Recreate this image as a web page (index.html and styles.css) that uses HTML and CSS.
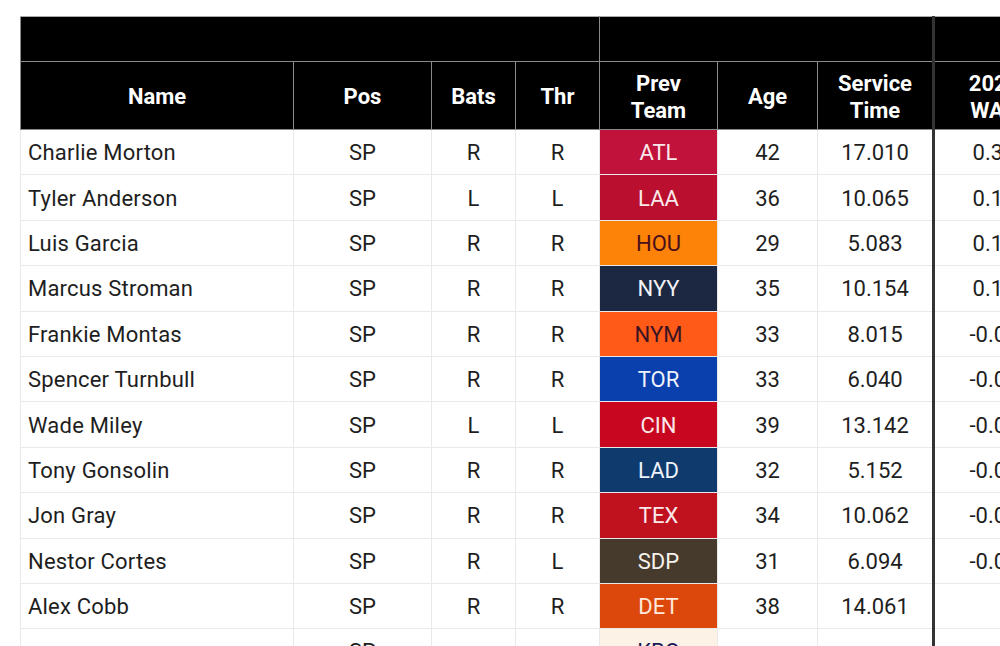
FILE: index.html
```html
<!DOCTYPE html>
<html>
<head>
<meta charset="utf-8">
<link rel="stylesheet" href="styles.css">
</head>
<body>
<div class="wrap">
<table class="roster">
  <colgroup>
    <col class="c-name"><col class="c-pos"><col class="c-bats"><col class="c-thr"><col class="c-team"><col class="c-age"><col class="c-svc"><col class="c-war">
  </colgroup>
  <thead>
    <tr class="super">
      <th colspan="4"></th>
      <th colspan="3"></th>
      <th class="war"></th>
    </tr>
    <tr class="head">
      <th>Name</th><th>Pos</th><th>Bats</th><th>Thr</th><th>Prev<br>Team</th><th>Age</th><th>Service<br>Time</th><th class="war">2024<br>WAR</th>
    </tr>
  </thead>
  <tbody>
    <tr><td class="name">Charlie Morton</td><td>SP</td><td>R</td><td>R</td><td class="team atl">ATL</td><td>42</td><td>17.010</td><td class="war">0.35</td></tr>
    <tr><td class="name">Tyler Anderson</td><td>SP</td><td>L</td><td>L</td><td class="team laa">LAA</td><td>36</td><td>10.065</td><td class="war">0.17</td></tr>
    <tr><td class="name">Luis Garcia</td><td>SP</td><td>R</td><td>R</td><td class="team hou">HOU</td><td>29</td><td>5.083</td><td class="war">0.12</td></tr>
    <tr><td class="name">Marcus Stroman</td><td>SP</td><td>R</td><td>R</td><td class="team nyy">NYY</td><td>35</td><td>10.154</td><td class="war">0.10</td></tr>
    <tr><td class="name">Frankie Montas</td><td>SP</td><td>R</td><td>R</td><td class="team nym">NYM</td><td>33</td><td>8.015</td><td class="war">-0.02</td></tr>
    <tr><td class="name">Spencer Turnbull</td><td>SP</td><td>R</td><td>R</td><td class="team tor">TOR</td><td>33</td><td>6.040</td><td class="war">-0.05</td></tr>
    <tr><td class="name">Wade Miley</td><td>SP</td><td>L</td><td>L</td><td class="team cin">CIN</td><td>39</td><td>13.142</td><td class="war">-0.06</td></tr>
    <tr><td class="name">Tony Gonsolin</td><td>SP</td><td>R</td><td>R</td><td class="team lad">LAD</td><td>32</td><td>5.152</td><td class="war">-0.08</td></tr>
    <tr><td class="name">Jon Gray</td><td>SP</td><td>R</td><td>R</td><td class="team tex">TEX</td><td>34</td><td>10.062</td><td class="war">-0.09</td></tr>
    <tr><td class="name">Nestor Cortes</td><td>SP</td><td>R</td><td>L</td><td class="team sdp">SDP</td><td>31</td><td>6.094</td><td class="war">-0.09</td></tr>
    <tr><td class="name">Alex Cobb</td><td>SP</td><td>R</td><td>R</td><td class="team det">DET</td><td>38</td><td>14.061</td><td class="war"></td></tr>
    <tr><td class="name"></td><td>SP</td><td></td><td></td><td class="team kbo">KBO</td><td></td><td></td><td class="war"></td></tr>
  </tbody>
</table>
</div>
</body>
</html>
```

FILE: styles.css
```css
html, body {
  margin: 0;
  padding: 0;
  background: #fff;
  overflow: hidden;
}
body {
  font-family: Roboto, "Liberation Sans", sans-serif;
  color: #1e1e1e;
}
.wrap {
  padding: 16px 0 0 20px;
  width: 1100px;
}
.roster {
  border-collapse: collapse;
  table-layout: fixed;
  width: 1033px;
  font-size: 22px;
}
.c-name { width: 273px; }
.c-pos { width: 138px; }
.c-bats { width: 84px; }
.c-thr { width: 84px; }
.c-team { width: 118px; }
.c-age { width: 100px; }
.c-svc { width: 116px; }
.c-war { width: 120px; }

.roster th {
  background: #000;
  color: #fff;
  font-weight: 700;
  border: 1px solid #8a8a8a;
  padding: 0;
  text-align: center;
  line-height: 27px;
}
.super th {
  height: 44px;
  border-top-color: #aaa;
}
.head th {
  height: 65px;
  padding-top: 2px;
}
.roster td {
  height: 42.4px;
  padding: 2px 0 0;
  border: 1px solid #e9e9e9;
  text-align: center;
  vertical-align: middle;
  line-height: 24px;
  white-space: nowrap;
}
.roster td.name {
  text-align: left;
  padding-left: 7px;
  letter-spacing: 0.2px;
}
.roster .war {
  border-left: 3px solid #333;
}
.roster th.war {
  border-left: 3px solid #333;
}
.team {
  border-color: #f3e6e6;
}
.atl { background: #c0123a; color: #fbe8ea; }
.laa { background: #ba0f2e; color: #fbe8ea; }
.hou { background: #fd8208; color: #4a0f1c; }
.nyy { background: #1c2841; color: #f2f2f6; }
.nym { background: #ff5a17; color: #3a1424; }
.tor { background: #0a3fae; color: #eef2fb; }
.cin { background: #c8061f; color: #fbe8ea; }
.lad { background: #0f3a6e; color: #eef2fb; }
.tex { background: #c0111f; color: #fbe8ea; }
.sdp { background: #463a2c; color: #f7f2ec; }
.det { background: #dc480c; color: #fde9dd; }
.kbo { background: #fdf2e6; color: #1a1a5a; }
```
